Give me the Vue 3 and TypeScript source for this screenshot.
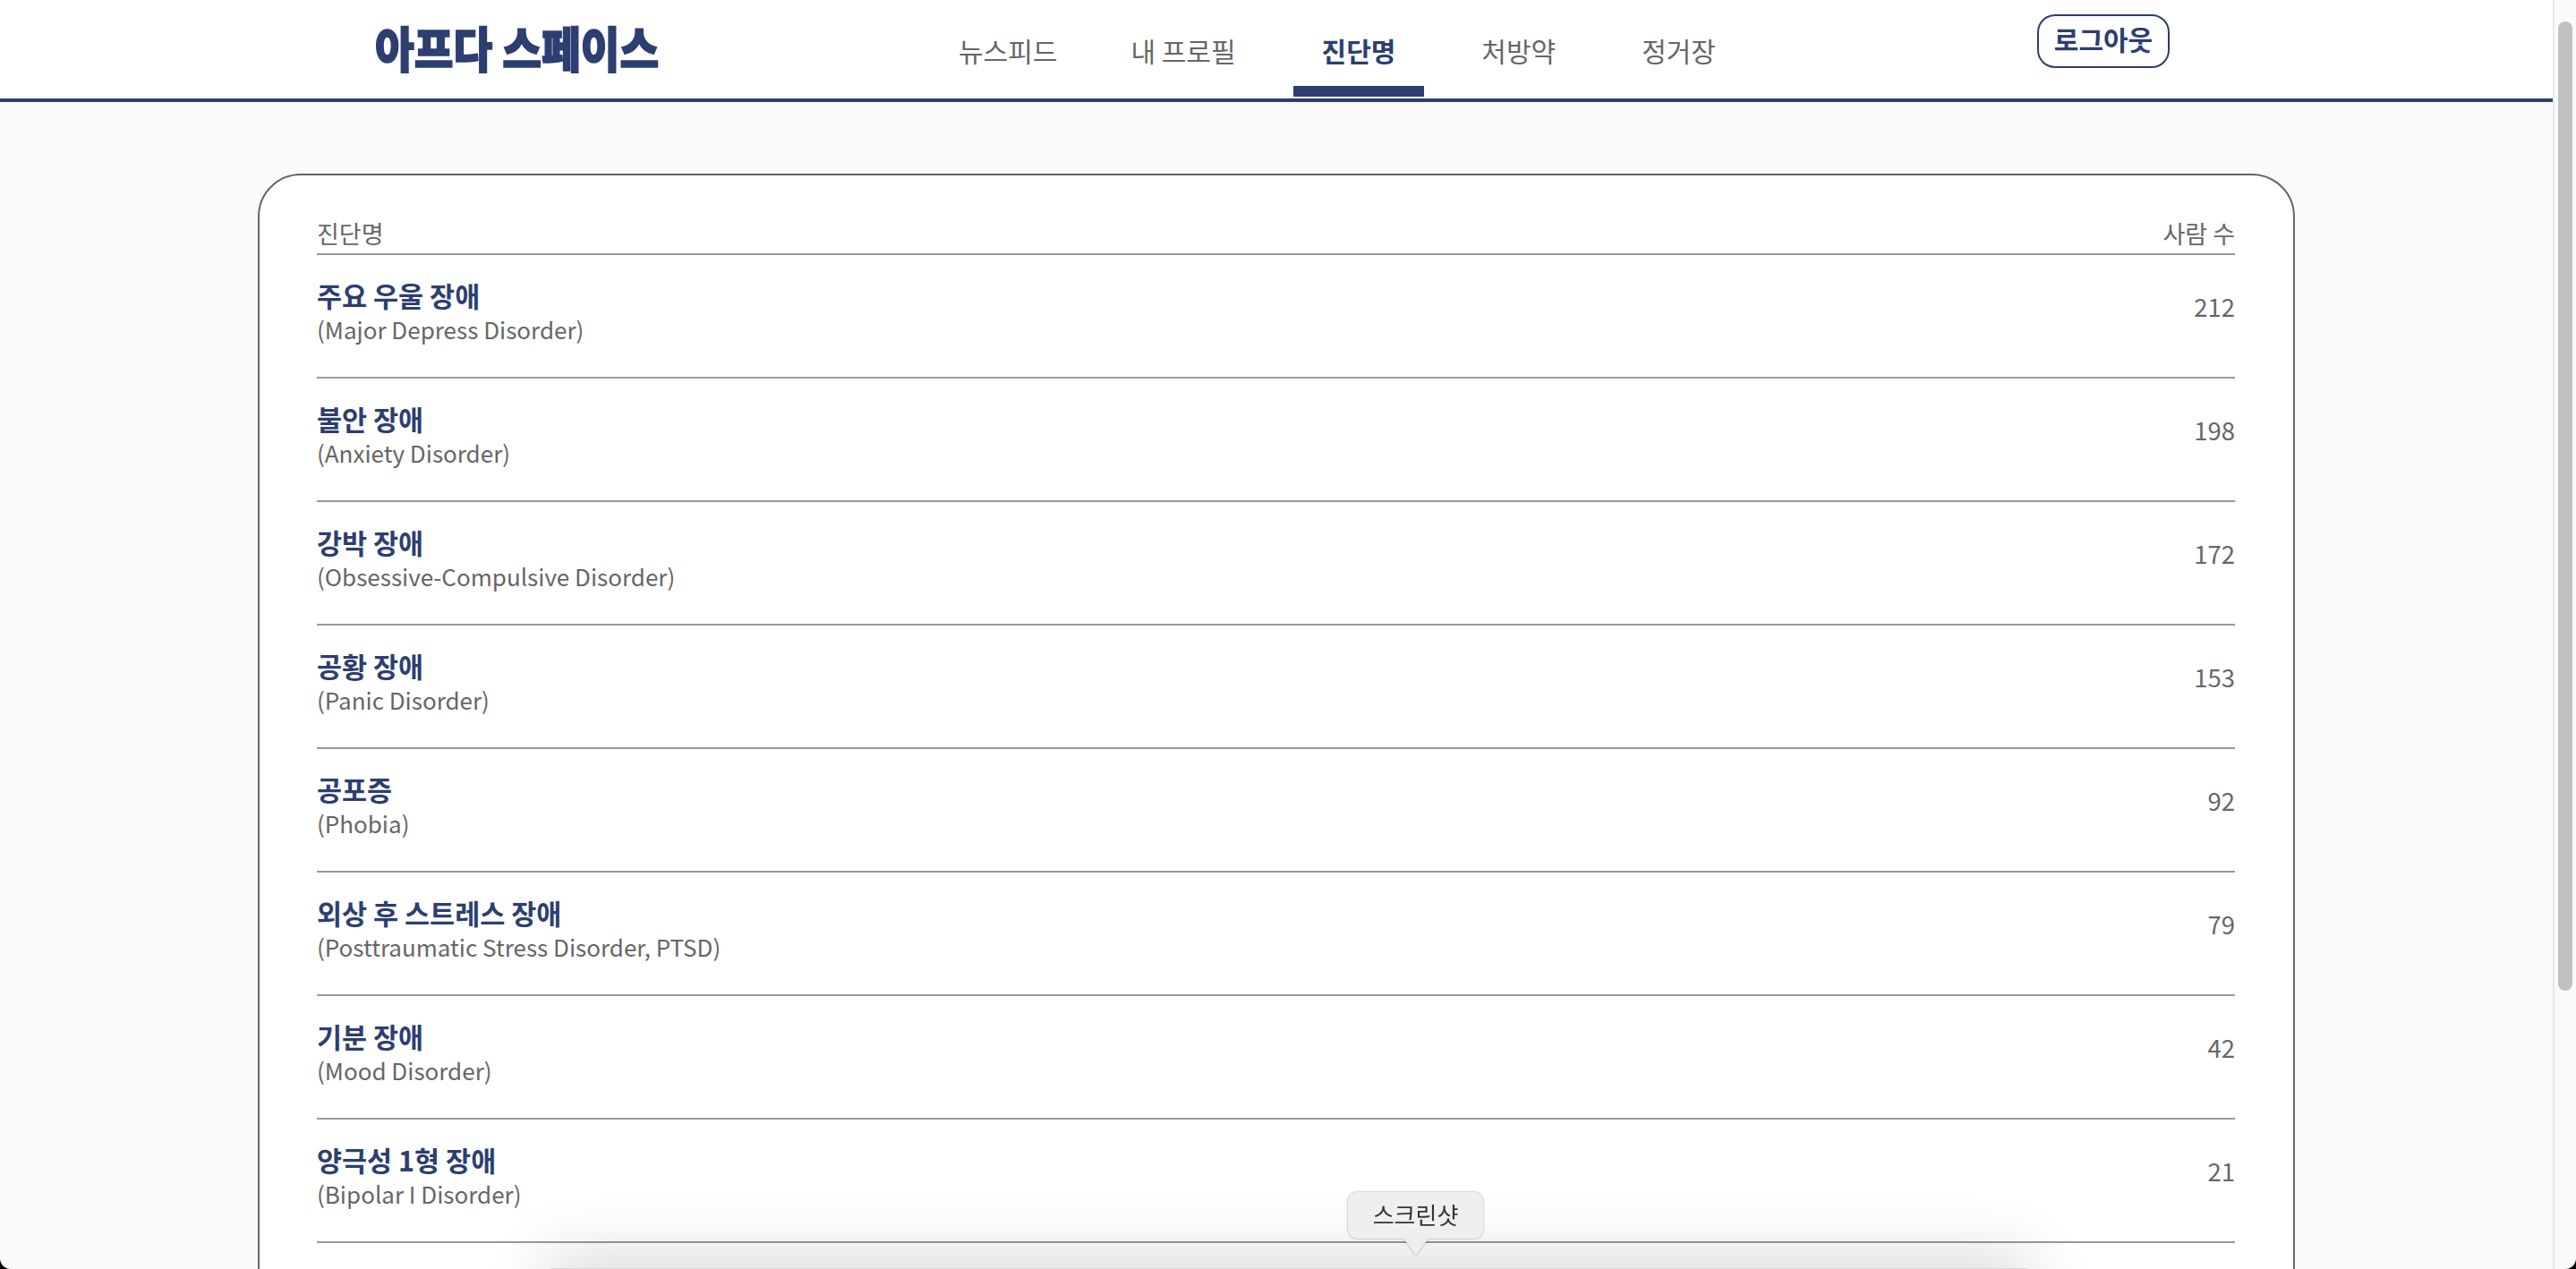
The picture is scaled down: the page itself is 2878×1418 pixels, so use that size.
<template>
  <div class="page">
    <header class="top-bar">
      <h1 class="logo">아프다 스페이스</h1>
      <nav class="nav">
        <a v-for="item in navItems" :key="item" class="nav-item" :class="{ active: item === activeNav }">
          {{ item }}
        </a>
      </nav>
      <button class="logout-btn">로그아웃</button>
    </header>

    <main class="content">
      <section class="card">
        <div class="table-head">
          <span>진단명</span>
          <span>사람 수</span>
        </div>
        <div v-for="row in diagnoses" :key="row.name" class="row">
          <div class="row-text">
            <div class="row-name">{{ row.name }}</div>
            <div class="row-sub">({{ row.english }})</div>
          </div>
          <div class="row-count">{{ row.count }}</div>
        </div>
      </section>
    </main>

    <div class="scrollbar"><div class="thumb"></div></div>
    <div class="dock"></div>
    <div class="tip">스크린샷</div>
    <div class="corner corner-left"></div>
    <div class="corner corner-right"></div>
  </div>
</template>

<script setup lang="ts">
interface Diagnosis {
  name: string
  english: string
  count: number
}

const navItems: string[] = ['뉴스피드', '내 프로필', '진단명', '처방약', '정거장']
const activeNav = '진단명'

const diagnoses: Diagnosis[] = [
  { name: '주요 우울 장애', english: 'Major Depress Disorder', count: 212 },
  { name: '불안 장애', english: 'Anxiety Disorder', count: 198 },
  { name: '강박 장애', english: 'Obsessive-Compulsive Disorder', count: 172 },
  { name: '공황 장애', english: 'Panic Disorder', count: 153 },
  { name: '공포증', english: 'Phobia', count: 92 },
  { name: '외상 후 스트레스 장애', english: 'Posttraumatic Stress Disorder, PTSD', count: 79 },
  { name: '기분 장애', english: 'Mood Disorder', count: 42 },
  { name: '양극성 1형 장애', english: 'Bipolar I Disorder', count: 21 }
]
</script>

<style scoped>
.page {
  position: relative;
  height: 1418px;
  overflow: hidden;
  background: #fafafa;
  font-family: "Noto Sans CJK KR", "Noto Sans", sans-serif;
  color: #666;
}

.top-bar {
  display: flex;
  align-items: flex-start;
  width: 2852px;
  height: 114px;
  box-sizing: border-box;
  padding: 0 428px 0 419px;
  background: #fff;
  border-bottom: 4px solid #2d3e70;
}

.logo {
  margin: 21px 0 0;
  width: 318px;
  font-size: 52px;
  line-height: 64px;
  font-weight: 900;
  color: #2d3e70;
  white-space: nowrap;
  -webkit-text-stroke: 1.5px #2d3e70;
  transform: scale(0.915, 1.04);
  transform-origin: left center;
}

.nav {
  display: flex;
  gap: 32px;
  margin-left: 302px;
}

.nav-item {
  height: 108px;
  box-sizing: border-box;
  padding: 34px 32px 0;
  font-size: 30px;
  line-height: 44px;
  color: #666;
  white-space: nowrap;
}

.nav-item:first-child {
  margin-right: -14px;
}

.nav-item.active {
  font-weight: 700;
  color: #2d3e70;
  border-bottom: 12px solid #2d3e70;
}

.logout-btn {
  margin: 16px 0 0 auto;
  width: 148px;
  height: 60px;
  padding: 0 0 6px;
  border: 2px solid #2d3e70;
  border-radius: 20px;
  background: #fff;
  font-family: inherit;
  font-size: 30px;
  font-weight: 700;
  color: #2d3e70;
}

.content {
  width: 2852px;
  padding-top: 80px;
}

.card {
  box-sizing: border-box;
  width: 2276px;
  margin-left: 288px;
  padding: 40px 65px 80px 64px;
  background: #fff;
  border: 2px solid #666;
  border-radius: 48px;
}

.table-head {
  display: flex;
  justify-content: space-between;
  align-items: flex-end;
  height: 47px;
  font-size: 27px;
  line-height: 44px;
  border-bottom: 2px solid #999;
}

.row {
  display: flex;
  justify-content: space-between;
  align-items: flex-start;
  height: 138px;
  box-sizing: border-box;
  padding-top: 24px;
  border-bottom: 2px solid #999;
}

.row-name {
  font-size: 30.5px;
  line-height: 43px;
  font-weight: 700;
  color: #2d3e70;
}

.row-sub {
  font-size: 26px;
  line-height: 32px;
  color: #666;
}

.row-count {
  margin-top: 13px;
  font-size: 27.5px;
  line-height: 40px;
  color: #666;
}

.scrollbar {
  position: absolute;
  top: 0;
  right: 0;
  width: 26px;
  height: 100%;
  box-sizing: border-box;
  background: #fafafa;
  border-left: 2px solid #e8e8e8;
}

.thumb {
  position: absolute;
  top: 24px;
  left: 4px;
  width: 16px;
  height: 1083px;
  border-radius: 8px;
  background: #c1c1c1;
}

.dock {
  position: absolute;
  left: 615px;
  top: 1417px;
  width: 1649px;
  height: 60px;
  background: #d8d8d8;
  box-shadow: 0 -8px 70px 4px rgba(0, 0, 0, 0.16);
}

.tip {
  position: absolute;
  left: 1506px;
  top: 1332px;
  width: 151px;
  height: 52px;
  border-radius: 10px;
  background: #efefef;
  filter: drop-shadow(0 0 1px rgba(0, 0, 0, 0.4));
  font-size: 26px;
  line-height: 50px;
  text-align: center;
  color: #333;
}

.tip::after {
  content: "";
  position: absolute;
  left: 62px;
  top: 52px;
  border-left: 14px solid transparent;
  border-right: 14px solid transparent;
  border-top: 18px solid #efefef;
}

.corner {
  position: absolute;
  bottom: 0;
  width: 12px;
  height: 12px;
}

.corner-left {
  left: 0;
  background: radial-gradient(circle at 100% 0, transparent 11.5px, #000 12.5px);
}

.corner-right {
  right: 0;
  background: radial-gradient(circle at 0 0, transparent 11.5px, #000 12.5px);
}
</style>

<style>
html,
body {
  margin: 0;
  overflow: hidden;
}
</style>
